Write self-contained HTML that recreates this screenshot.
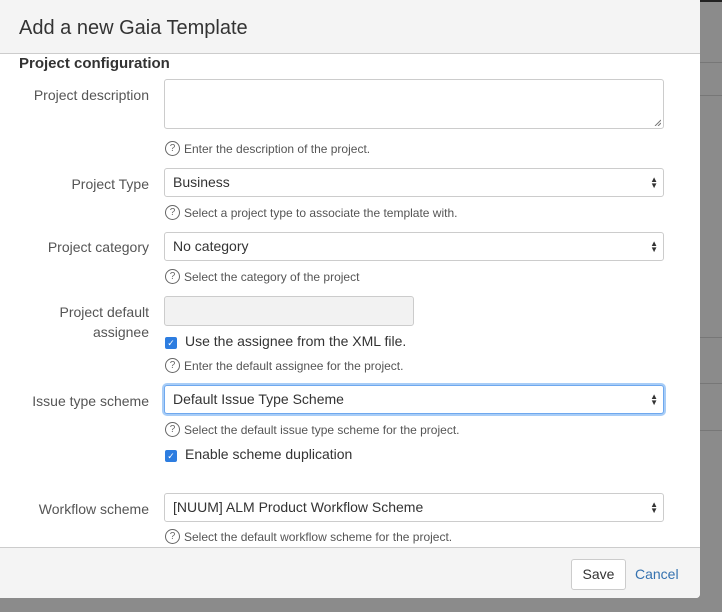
<!DOCTYPE html>
<html><head><style>
*{box-sizing:border-box;margin:0;padding:0}
body{width:722px;height:612px;background:#8b8b8b;font-family:"Liberation Sans",Arial,sans-serif;position:relative;overflow:hidden}
.ln{position:absolute;left:700px;width:22px;height:1px;background:#777}
.dlg{position:absolute;left:0;top:0;width:700px;height:598px;background:#fff;border-radius:0 0 4px 0;overflow:hidden}
.hd{position:absolute;left:0;top:0;width:700px;height:54px;background:#f4f4f4;border-bottom:1px solid #ccc}
.hd h1{position:absolute;left:19px;top:17px;font-size:20px;font-weight:normal;color:#333}
.sec{position:absolute;left:19px;top:55px;font-size:15px;font-weight:bold;color:#333}
.lb{position:absolute;right:551px;font-size:14px;color:#555;text-align:right;line-height:20px}
.in{position:absolute;left:164px;width:500px;border:1px solid #ccc;border-radius:3px;background:#fff;font-size:14px;color:#333;padding-left:8px}
.sel{height:29px;line-height:27px}
.arr{position:absolute;right:5px;top:8px;font-size:8px;line-height:6px;color:#333}
.hp{position:absolute;left:165px;font-size:12px;color:#555;line-height:14px}
.q{display:inline-block;width:15px;height:15px;border:1.3px solid #666;border-radius:50%;font-size:10px;text-align:center;line-height:13px;color:#666;margin-right:4px;vertical-align:top;margin-top:-1px}
.cb{position:absolute;left:165px;font-size:14px;color:#333;line-height:16px}
.cb i{display:inline-block;width:12px;height:12px;background:#2d7de0;border-radius:2px;margin-right:8px;vertical-align:0px;color:#fff;font-size:9px;font-style:normal;text-align:center;line-height:12px}
.ft{position:absolute;left:0;top:547px;width:700px;height:51px;background:#f4f4f4;border-top:1px solid #ccc}
.save{position:absolute;left:571px;top:11px;width:55px;height:31px;border:1px solid #ccc;border-radius:3px;background:#fff;font-size:14px;text-align:center;line-height:29px;color:#333}
.cancel{position:absolute;left:635px;top:18px;font-size:14px;color:#3572b0}
</style></head><body>
<div style="position:absolute;left:700px;top:0;width:22px;height:2px;background:#222"></div>
<div class="ln" style="top:62px"></div><div class="ln" style="top:95px"></div><div class="ln" style="top:337px"></div><div class="ln" style="top:383px"></div><div class="ln" style="top:430px"></div>
<div class="dlg">
<div class="hd"><h1>Add a new Gaia Template</h1></div>
<div class="sec">Project configuration</div>
<div class="lb" style="top:85px">Project description</div>
<div class="in" style="top:79px;height:50px"><svg style="position:absolute;right:2px;bottom:2px" width="7" height="7"><path d="M1 7L7 1M4 7L7 4" stroke="#777" stroke-width="1"/></svg></div>
<div class="hp" style="top:142px"><span class="q">?</span>Enter the description of the project.</div>
<div class="lb" style="top:174px">Project Type</div>
<div class="in sel" style="top:168px">Business<span class="arr">▲<br>▼</span></div>
<div class="hp" style="top:206px"><span class="q">?</span>Select a project type to associate the template with.</div>
<div class="lb" style="top:237px">Project category</div>
<div class="in sel" style="top:232px">No category<span class="arr">▲<br>▼</span></div>
<div class="hp" style="top:270px"><span class="q">?</span>Select the category of the project</div>
<div class="lb" style="top:302px">Project default<br>assignee</div>
<div class="in" style="top:296px;width:250px;height:30px;background:#f2f2f2"></div>
<div class="cb" style="top:333px"><i>✓</i>Use the assignee from the XML file.</div>
<div class="hp" style="top:359px"><span class="q">?</span>Enter the default assignee for the project.</div>
<div class="lb" style="top:391px">Issue type scheme</div>
<div class="in sel" style="top:385px;border:1px solid #6fa8ee;box-shadow:0 0 0 2px #a8cdf7">Default Issue Type Scheme<span class="arr">▲<br>▼</span></div>
<div class="hp" style="top:423px"><span class="q">?</span>Select the default issue type scheme for the project.</div>
<div class="cb" style="top:446px"><i>✓</i>Enable scheme duplication</div>
<div class="lb" style="top:499px">Workflow scheme</div>
<div class="in sel" style="top:493px">[NUUM] ALM Product Workflow Scheme<span class="arr">▲<br>▼</span></div>
<div class="hp" style="top:530px"><span class="q">?</span>Select the default workflow scheme for the project.</div>
<div class="ft"><div class="save">Save</div><div class="cancel">Cancel</div></div>
</div>
</body></html>
